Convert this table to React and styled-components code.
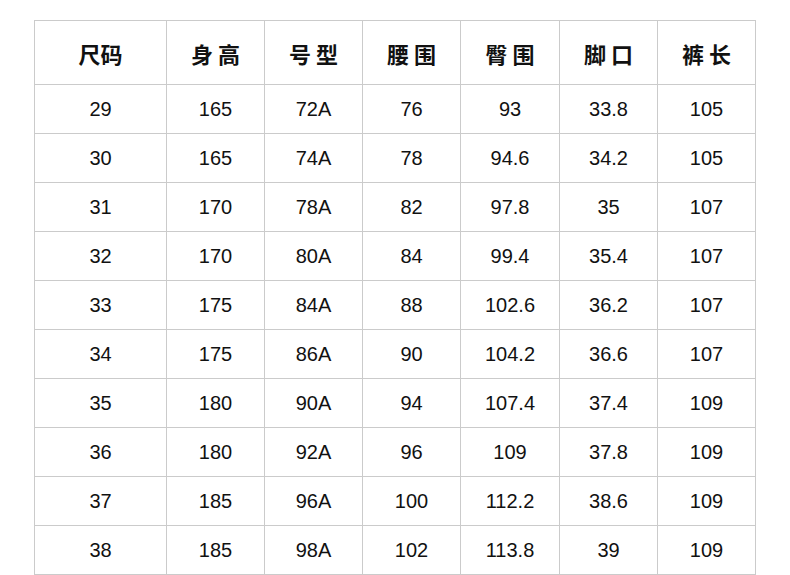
import React from 'react';
import styled, { createGlobalStyle } from 'styled-components';

const headers = ['尺码', '身 高', '号 型', '腰 围', '臀 围', '脚 口', '裤 长'];

const rows = [
  ['29', '165', '72A', '76', '93', '33.8', '105'],
  ['30', '165', '74A', '78', '94.6', '34.2', '105'],
  ['31', '170', '78A', '82', '97.8', '35', '107'],
  ['32', '170', '80A', '84', '99.4', '35.4', '107'],
  ['33', '175', '84A', '88', '102.6', '36.2', '107'],
  ['34', '175', '86A', '90', '104.2', '36.6', '107'],
  ['35', '180', '90A', '94', '107.4', '37.4', '109'],
  ['36', '180', '92A', '96', '109', '37.8', '109'],
  ['37', '185', '96A', '100', '112.2', '38.6', '109'],
  ['38', '185', '98A', '102', '113.8', '39', '109'],
];

function App() {
  return (
    <>
      <GlobalStyle />
      <Page>
        <SizeGrid>
          {headers.map((h) => (
            <HeadCell key={h}>{h}</HeadCell>
          ))}
          {rows.map((row, i) =>
            row.map((val, j) => <Cell key={i + '-' + j}>{val}</Cell>)
          )}
        </SizeGrid>
      </Page>
    </>
  );
}
export default App;

const GlobalStyle = createGlobalStyle`
  html, body {
    margin: 0;
    padding: 0;
    background: #fff;
  }
  body {
    font-family: "Liberation Sans", "Noto Sans CJK SC", sans-serif;
    color: #111;
  }
`;

const Page = styled.div`
  width: 790px;
  height: 575px;
  padding: 20px 0 0 34px;
  box-sizing: border-box;
  overflow: hidden;
`;

const SizeGrid = styled.div`
  display: inline-grid;
  grid-template-columns: 131px 97px 97px 97px 98px 97px 97px;
  grid-template-rows: 63px repeat(10, 48px);
  gap: 1px;
  padding: 1px;
  background: #cbcbcb;
`;

const Cell = styled.div`
  background: #fff;
  display: flex;
  align-items: center;
  justify-content: center;
  font-family: "Liberation Sans", sans-serif;
  font-size: 20px;
  color: #111;
`;

const HeadCell = styled(Cell)`
  font-family: "Noto Sans CJK SC", sans-serif;
  font-size: 22px;
  font-weight: 700;
  white-space: pre;
`;
